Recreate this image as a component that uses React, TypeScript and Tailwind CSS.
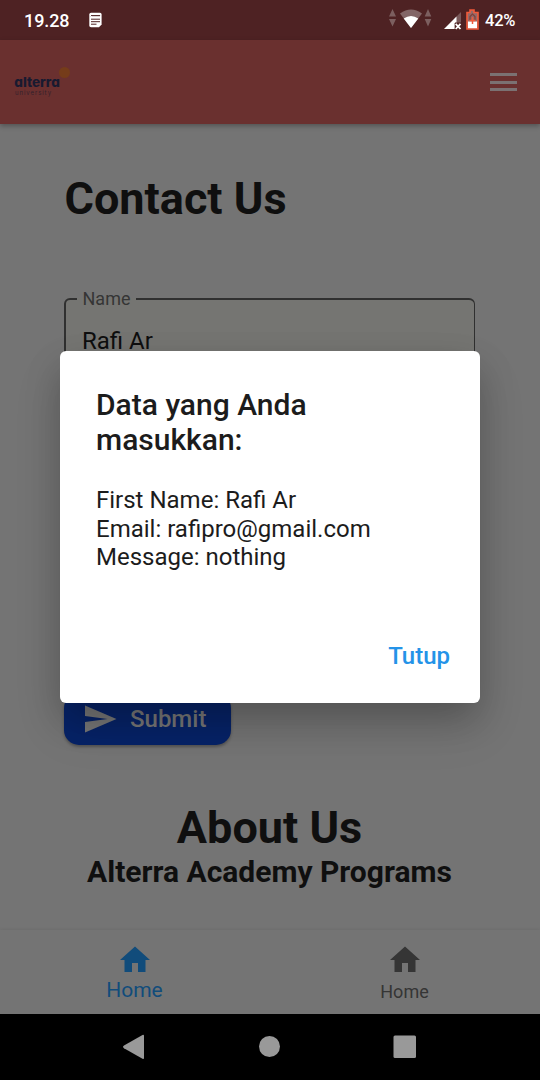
import React from "react";

function NoteIcon() {
  return (
    <svg className="ml-[20px] h-[16px] w-[13px]" viewBox="0 0 13 16">
      <path d="M2 .8H11Q12.600.8 12.600 2.400V12.500L10 15.200H2Q.3 15.200.3 13.500V2.400Q.3.8 2 .8Z" fill="#fff" />
      <path d="M2 4.200 3 3l1 1.200L5 3l1 1.200L7 3l1 1.200L9 3l1 1.200L11 3M2 7.200h9M2 9.700h9M2 12.200h5.500" fill="none" stroke="#4e2223" strokeWidth="1" />
    </svg>
  );
}

function StatusIcons() {
  return (
    <svg className="h-[22px] w-[92px]" viewBox="0 0 92 22">
      <path d="M4.500 0 8 7.500H1ZM4.500 17.500 8 10H1ZM40 0l3.300 7.500h-6.600ZM40 17.500l3.300-7.500h-6.600Z" fill="#7c5f5f" />
      <path d="M12 4.500Q23-3.500 34 4.500L23 19Z" fill="#836667" />
      <path d="M15.700 9.500Q23 4.500 30.300 9.500L23 19Z" fill="#fff" />
      <path d="M73 3v17H56Z" fill="#79595a" />
      <path d="M66.500 9.500V20H56ZM66.500 9.500 68.500 7.500V14H66.500Z" fill="#fff" />
      <path d="M67 13.500h6.500V20.500h-6.500Z" fill="#4e2223" />
      <path d="m67.700 14.800 4.800 5.200m0-5.200-4.800 5.200" stroke="#fff" strokeWidth="1.800" />
      <path d="M82 1h4v2.500h4V20H79V3.500h3Z" fill="#936a69" stroke="#f25a3a" strokeWidth="1.600" />
      <path d="M80 12.500h9V19.200H80Z" fill="#fff" />
      <path d="M82 11V7.500L84.500 5 87 7.500V11" fill="none" stroke="#80403a" strokeWidth="1.200" />
      <path d="M84.500 8v7M81.500 11.500h6" stroke="#ef5b3c" strokeWidth="1.500" />
    </svg>
  );
}

function HomeIcon() {
  return (
    <svg className="h-[36px] w-[36px]" viewBox="0 0 24 24" fill="currentColor">
      <path d="M10 20v-6h4v6h5v-8h3L12 3 2 12h3v8z" />
    </svg>
  );
}

function Logo() {
  return (
    <svg className="h-[32px] w-[58px]" viewBox="0 0 58 32">
      <circle cx="50.500" cy="6.500" r="5.500" fill="#753c1a" />
      <text x="0.300" y="21" textLength="45.500" lengthAdjust="spacingAndGlyphs" fontSize="13" fontWeight="800" className="font-['Inter',sans-serif] [font-feature-settings:'cv11','ss03']" fill="#181a30">alterra</text>
      <text x="1" y="29" textLength="36" fontSize="6" className="font-['Inter',sans-serif]" fill="#32202c">university</text>
    </svg>
  );
}

export default function App() {
  return (
    <div className="relative flex h-[1080px] w-[540px] flex-col overflow-hidden bg-[#747474] font-['Roboto',sans-serif] text-[#0f0f0f]">
      <div className="flex h-[40px] shrink-0 items-center bg-[#4e2223] pl-[24px] pr-[24px] text-white">
        <span className="mt-[1px] w-[45px] text-[18px] font-medium leading-[40px] tracking-[-0.1px]">19.28</span>
        <NoteIcon />
        <div className="ml-auto flex items-center">
          <StatusIcons />
          <span className="ml-[5px] mt-[1px] w-[31px] text-[16.500px] font-medium leading-[40px] tracking-[-0.2px]">42%</span>
        </div>
      </div>

      <header className="z-10 flex h-[84px] shrink-0 items-center justify-between bg-[#6a302f] pl-[14px] pr-[23px] shadow-[0_2px_5px_rgba(0,0,0,0.3)]">
        <Logo />
        <div className="flex w-[27px] flex-col gap-[4.500px]">
          <div className="h-[3px] bg-[#7b7172]" />
          <div className="h-[3px] bg-[#7b7172]" />
          <div className="h-[3px] bg-[#7b7172]" />
        </div>
      </header>

      <main className="flex min-h-0 flex-1 flex-col px-[64px] pt-[48px]">
        <h1 className="pl-[0.500px] text-[45px] font-bold leading-[53px]">Contact Us</h1>
        <fieldset className="mt-[63px] h-[96px] w-[411px] shrink-0 rounded-[6px] border-2 border-r-[1.500px] border-[#303030] bg-[#757572] pl-[10.500px]">
          <legend className="px-[6px] text-[18px] leading-[22px] text-[#353535]">Name</legend>
          <div className="pl-[5.500px] pt-[17px] text-[24px] leading-[28px]">Rafi Ar</div>
        </fieldset>
        <button className="mt-[309px] flex h-[52px] w-[167px] shrink-0 items-center rounded-[15px] bg-[#072368] pl-[18px] text-[#777777] shadow-[0_2px_3px_rgba(0,0,0,0.3)]">
          <svg className="h-[36px] w-[36px]" viewBox="0 0 24 24" fill="currentColor">
            <path d="M2.010 21 23 12 2.010 3 2 10l15 2-15 2z" />
          </svg>
          <span className="ml-[12px] text-[24px] font-medium leading-[28px]">Submit</span>
        </button>
        <section className="-mx-[64px] mt-[56px] flex flex-col items-center pr-[1px]">
          <h2 className="text-[45px] font-bold leading-[53px]">About Us</h2>
          <h3 className="text-[30px] font-bold leading-[35px]">Alterra Academy Programs</h3>
        </section>
      </main>

      <nav className="grid h-[84px] shrink-0 grid-cols-2 bg-[#747474] shadow-[0_-1px_3px_rgba(0,0,0,0.06)]">
        <div className="flex flex-col items-center pr-[1px] pt-[12px] text-[#114c7b]">
          <HomeIcon />
          <span className="text-[21px] leading-[24px]">Home</span>
        </div>
        <div className="flex flex-col items-center pr-[1px] pt-[12px] text-[#353535]">
          <HomeIcon />
          <span className="mt-[3px] text-[18px] leading-[21px]">Home</span>
        </div>
      </nav>

      <div className="h-[66px] shrink-0 bg-black">
        <svg className="h-[66px] w-[540px]" viewBox="0 0 540 66" fill="#999">
          <path d="M124 31.600 142.500 21q1.500-.6 1.500 1v22q0 1.500-1.500.8L124 34.200q-2-1.300 0-2.600Z" />
          <circle cx="269.500" cy="32.500" r="10.500" />
          <rect x="393.500" y="21.500" width="22.500" height="22.500" rx="1.500" />
        </svg>
      </div>

      <div role="dialog" className="absolute left-[60px] top-[351px] z-20 flex h-[352px] w-[420px] flex-col rounded-[6px] bg-white px-[36px] pt-[36px] text-[#1c1c1c] shadow-[0_16px_36px_-2px_rgba(0,0,0,0.22),0_24px_50px_rgba(0,0,0,0.1)]">
        <h2 className="text-[30px] font-medium leading-[35px]">Data yang Anda<br />masukkan:</h2>
        <p className="mt-[29px] text-[24px] leading-[28.500px]">First Name: Rafi Ar<br />Email: rafipro@gmail.com<br />Message: nothing</p>
        <button className="-mr-[6px] mt-[70px] self-end text-[24px] font-medium leading-[28px] text-[#2493e8]">Tutup</button>
      </div>
    </div>
  );
}
